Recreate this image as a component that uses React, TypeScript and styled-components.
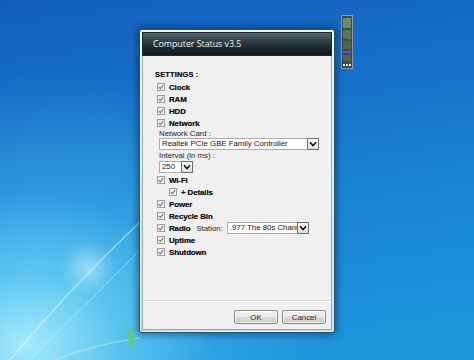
import React from 'react';
import styled, { createGlobalStyle } from 'styled-components';

const Global = createGlobalStyle`
  html, body { margin: 0; padding: 0; width: 474px; height: 360px; overflow: hidden; }
  body { font-family: "Liberation Sans", Arial, sans-serif; }
  * { box-sizing: border-box; }
`;

const Desktop = styled.div`
  position: relative;
  width: 474px;
  height: 360px;
  overflow: hidden;
  padding: 29px 0 0 139px;
  background:
    radial-gradient(ellipse 190px 150px at 25px 345px, rgba(170, 238, 253, 0.95), rgba(110, 210, 246, 0.6) 50%, rgba(60, 170, 230, 0) 100%),
    radial-gradient(ellipse 270px 230px at 60px 300px, rgba(80, 195, 242, 0.75), rgba(60, 170, 230, 0) 100%),
    linear-gradient(172deg, #125dbb 0%, #1670c9 28%, #1a85d5 58%, #1e98de 100%);
`;

const Wallpaper = styled.svg`
  position: absolute;
  left: 0;
  top: 0;
  width: 474px;
  height: 360px;
`;

const Gadget = styled.svg`
  position: absolute;
  left: 341px;
  top: 15px;
  width: 12px;
  height: 54px;
`;

const Frame = styled.div`
  position: relative;
  width: 196px;
  height: 304px;
  padding: 2px;
  border: 1px solid #24506f;
  border-radius: 3px;
  background: linear-gradient(180deg, #e9f2f9 0%, #cfe1ef 60%, #c3d9ea 100%);
  box-shadow: 0 0 7px 2px rgba(0, 25, 60, 0.45), inset 0 0 0 1px rgba(255, 255, 255, 0.75);
  display: flex;
  flex-direction: column;
`;

const TitleBar = styled.div`
  height: 24px;
  flex: none;
  display: flex;
  align-items: center;
  padding-left: 10px;
  background: linear-gradient(180deg, #55646a 0%, #36454a 30%, #1b282d 70%, #0c171b 100%);
  color: #eef3f4;
  font-family: "Open Sans", "Liberation Sans", sans-serif;
  font-size: 8.8px;
  border: 1px solid #1b2a30;
`;

const Body = styled.div`
  flex: 1;
  display: flex;
  flex-direction: column;
  background: #f0f0f0;
  border: 1px solid #9aa9b2;
  border-top: none;
`;

const Settings = styled.div`
  flex: 1;
  display: flex;
  flex-direction: column;
  padding: 13px 0 0 12px;
`;

const SectionTitle = styled.div`
  height: 12px;
  line-height: 12px;
  font-size: 7.4px;
  font-weight: bold;
  color: #111;
  letter-spacing: 0.2px;
  text-shadow: 0 0 0.4px rgba(0, 0, 0, 0.6);
`;

const Row = styled.div<{ $indent?: number }>`
  height: 12px;
  display: flex;
  align-items: center;
  gap: 4px;
  padding-left: ${(p) => p.$indent ?? 2}px;
`;

const Label = styled.span`
  font-size: 7.9px;
  font-weight: bold;
  color: #111;
  white-space: nowrap;
  letter-spacing: -0.1px;
  text-shadow: 0 0 0.4px rgba(0, 0, 0, 0.6);
`;

const PlainLabel = styled.span`
  font-size: 7.8px;
  color: #222;
  white-space: nowrap;
  margin-left: 2px;
`;

const Box = styled.span`
  width: 8px;
  height: 8px;
  flex: none;
  border: 1px solid #9a9c9e;
  background: linear-gradient(135deg, #ececec, #fafafa);
  display: flex;
  align-items: center;
  justify-content: center;
`;

const SubBlock = styled.div`
  display: flex;
  flex-direction: column;
  padding-left: 4px;
  margin-bottom: 1px;
`;

const FieldLabel = styled.div<{ $h: number }>`
  height: ${(p) => p.$h}px;
  line-height: ${(p) => p.$h}px;
  font-size: 7.8px;
  color: #222;
  white-space: nowrap;
`;

const SelectBox = styled.div<{ $w: number }>`
  width: ${(p) => p.$w}px;
  height: 12px;
  flex: none;
  display: flex;
  background: #fff;
  border: 1px solid #acacac;
`;

const SelectText = styled.div`
  flex: 1;
  overflow: hidden;
  white-space: nowrap;
  font-size: 7.8px;
  line-height: 10px;
  padding-left: 2px;
  color: #111;
`;

const DropButton = styled.div`
  width: 12px;
  height: 12px;
  margin: -1px -1px 0 0;
  flex: none;
  border: 1px solid #6e6e6e;
  background: linear-gradient(180deg, #fbfbfb, #dedede);
  display: flex;
  align-items: center;
  justify-content: center;
`;

const Footer = styled.div`
  height: 29px;
  flex: none;
  display: flex;
  justify-content: flex-end;
  align-items: flex-start;
  gap: 4px;
  padding: 9px 5px 0 0;
  border-top: 1px solid #d8d8d8;
  box-shadow: inset 0 1px 0 #ffffff;
`;

const Button = styled.div`
  width: 44px;
  height: 14px;
  border: 1px solid #8b8b8b;
  border-radius: 2px;
  background: linear-gradient(180deg, #f4f4f4 0%, #ebebeb 50%, #dddddd 51%, #cfcfcf 100%);
  box-shadow: inset 0 0 0 1px rgba(255, 255, 255, 0.7);
  font-size: 7.8px;
  color: #222;
  display: flex;
  align-items: center;
  justify-content: center;
`;

const Check = () => (
  <Box>
    <svg width="6" height="6" viewBox="0 0 6 6">
      <path d="M0.8 3.1 L2.3 4.6 L5.2 1.2" fill="none" stroke="#6f7376" strokeWidth="1.1" />
    </svg>
  </Box>
);

const Chevron = () => (
  <svg width="8" height="6" viewBox="0 0 8 6">
    <path d="M1 1.2 L4 4.5 L7 1.2" fill="none" stroke="#111" strokeWidth="1.6" />
  </svg>
);

const Select: React.FC<{ w: number; text: string }> = ({ w, text }) => (
  <SelectBox $w={w}>
    <SelectText>{text}</SelectText>
    <DropButton>
      <Chevron />
    </DropButton>
  </SelectBox>
);

const CheckRow: React.FC<{ label: string; indent?: number; children?: React.ReactNode }> = ({ label, indent, children }) => (
  <Row $indent={indent}>
    <Check />
    <Label>{label}</Label>
    {children}
  </Row>
);

export default function App() {
  return (
    <>
      <Global />
      <Desktop>
        <Wallpaper viewBox="0 0 474 360">
          <defs>
            <radialGradient id="glow" cx="0.5" cy="0.5" r="0.5">
              <stop offset="0" stopColor="#d8f6ff" stopOpacity="0.55" />
              <stop offset="1" stopColor="#bff0ff" stopOpacity="0" />
            </radialGradient>
          </defs>
          <circle cx="88" cy="268" r="28" fill="url(#glow)" />
          <path d="M10 360 C 60 300, 100 260, 140 222" stroke="#e8fbff" strokeOpacity="0.55" strokeWidth="1.2" fill="none" />
          <path d="M30 360 C 70 320, 110 280, 140 250" stroke="#e8fbff" strokeOpacity="0.4" strokeWidth="1" fill="none" />
          <path d="M55 360 C 85 348, 110 342, 140 338" stroke="#d8f7d0" strokeOpacity="0.6" strokeWidth="1.2" fill="none" />
          <path d="M128 326 C 134 332, 136 340, 132 350 C 128 342, 126 334, 128 326 Z" fill="#5ed06a" fillOpacity="0.85" />
        </Wallpaper>
        <Gadget viewBox="0 0 12 54">
          <rect x="0" y="0" width="12" height="54" fill="#3f4a48" />
          <rect x="0.5" y="0.5" width="11" height="53" fill="none" stroke="#8a9a96" strokeWidth="1" />
          <rect x="2" y="3" width="8" height="10" fill="#6f8a6a" />
          <rect x="2" y="15" width="8" height="9" fill="#5d7458" />
          <rect x="2" y="26" width="8" height="8" fill="#4e6250" />
          <rect x="2" y="36" width="8" height="2" fill="#4f5fd0" />
          <rect x="2" y="40" width="8" height="6" fill="#56605a" />
          <rect x="2" y="49" width="2" height="2" fill="#e8e8e8" />
          <rect x="5" y="49" width="2" height="2" fill="#e8e8e8" />
          <rect x="8" y="49" width="2" height="2" fill="#e8e8e8" />
        </Gadget>
        <Frame>
          <TitleBar>Computer Status v3.5</TitleBar>
          <Body>
            <Settings>
              <SectionTitle>SETTINGS :</SectionTitle>
              <CheckRow label="Clock" />
              <CheckRow label="RAM" />
              <CheckRow label="HDD" />
              <CheckRow label="Network" />
              <SubBlock>
                <FieldLabel $h={9}>Network Card :</FieldLabel>
                <Select w={160} text="Realtek PCIe GBE Family Controller" />
                <FieldLabel $h={11}>Interval (in ms) :</FieldLabel>
                <Select w={34} text="250" />
              </SubBlock>
              <CheckRow label="Wi-Fi" />
              <CheckRow label="+ Details" indent={14} />
              <CheckRow label="Power" />
              <CheckRow label="Recycle Bin" />
              <CheckRow label="Radio">
                <PlainLabel>Station:</PlainLabel>
                <Select w={82} text=".977 The 80s Channel" />
              </CheckRow>
              <CheckRow label="Uptime" />
              <CheckRow label="Shutdown" />
            </Settings>
            <Footer>
              <Button>OK</Button>
              <Button>Cancel</Button>
            </Footer>
          </Body>
        </Frame>
      </Desktop>
    </>
  );
}
